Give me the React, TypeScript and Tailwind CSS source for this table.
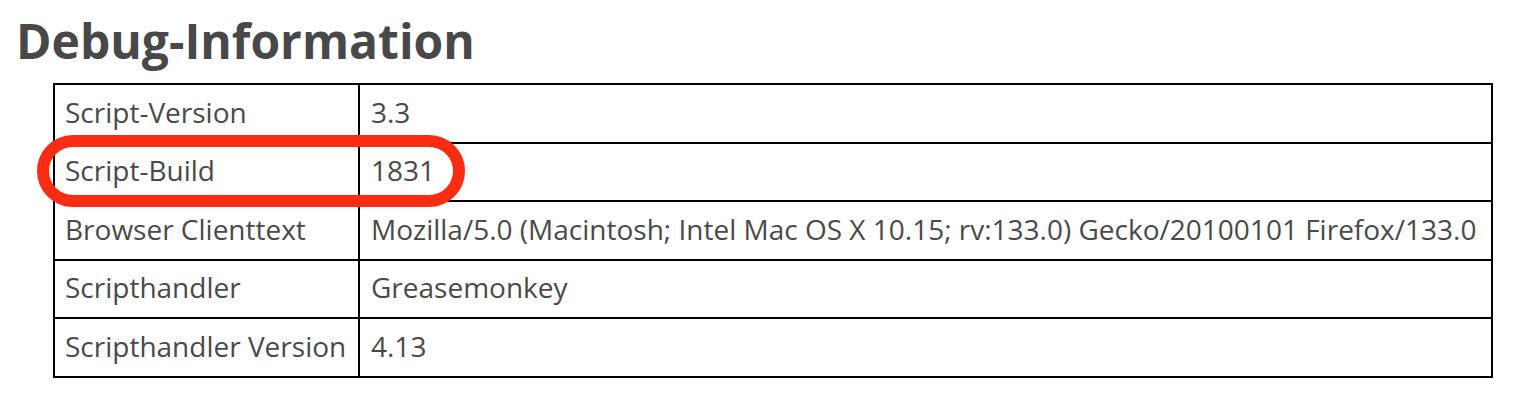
import React from 'react';

const rows: [string, string][] = [
  ['Script-Version', '3.3'],
  ['Script-Build', '1831'],
  ['Browser Clienttext', 'Mozilla/5.0 (Macintosh; Intel Mac OS X 10.15; rv:133.0) Gecko/20100101 Firefox/133.0'],
  ['Scripthandler', 'Greasemonkey'],
  ['Scripthandler Version', '4.13'],
];

const App: React.FC = () => {
  return (
    <div className="relative min-h-[416px] bg-white text-[#4a4a4a]" style={{ fontFamily: '"Open Sans", "Noto Sans", sans-serif' }}>
      <h1 className="ml-[16px] pt-[14px] text-[48px] font-bold leading-[54px] text-[#484848]">Debug-Information</h1>

      <table className="ml-[53px] mt-[15px] w-[1440px] border-collapse border-2 border-black text-[28px]">
        <tbody>
          {rows.map(([k, v]) => (
            <tr key={k} className="h-[58.5px]">
              <td className="w-[305px] border-2 border-black px-[10px] pt-0 pb-[3px] whitespace-nowrap">{k}</td>
              <td className="border-2 border-black px-[11px] pt-0 pb-[3px] whitespace-nowrap">{v}</td>
            </tr>
          ))}
        </tbody>
      </table>

      {/* highlight marker */}
      <div className="pointer-events-none absolute left-[37px] top-[135px] h-[72px] w-[428px] rounded-full border-[12px] border-[#fb2c12]" />
    </div>
  );
};

export default App;
